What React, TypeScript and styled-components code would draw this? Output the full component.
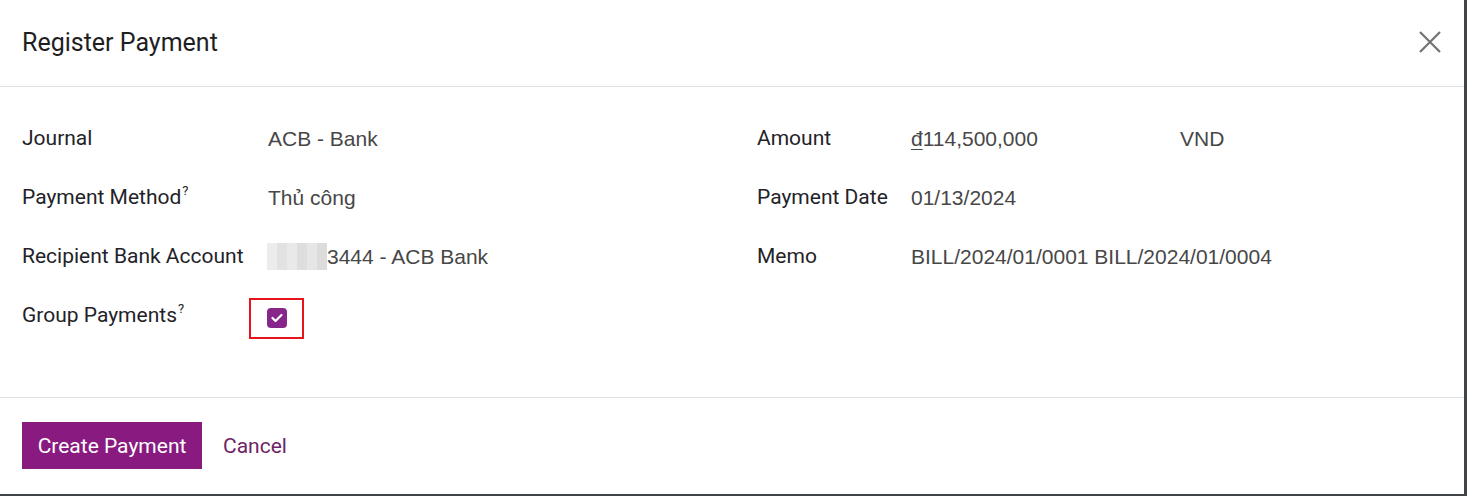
import React from 'react';
import styled, { createGlobalStyle } from 'styled-components';

const GlobalStyle = createGlobalStyle`
  html, body {
    margin: 0;
    padding: 0;
    background: #3f4449;
    font-family: 'Roboto', 'Noto Sans', sans-serif;
  }
  * { box-sizing: border-box; }
`;

const Dialog = styled.div`
  width: 1464px;
  height: 494px;
  background: #fff;
  display: flex;
  flex-direction: column;
`;

const Header = styled.div`
  height: 87px;
  display: flex;
  align-items: center;
  justify-content: space-between;
  padding: 0 22px 2px 22px;
  border-bottom: 1px solid #dee2e6;
`;

const Title = styled.h4`
  margin: 0;
  font-size: 25px;
  font-weight: 400;
  color: #1f1f1f;
`;

const CloseButton = styled.button`
  border: none;
  background: none;
  padding: 0;
  width: 26px;
  height: 26px;
  cursor: pointer;
  display: flex;
  align-items: center;
  justify-content: center;
  margin-right: -1px;
`;

const Body = styled.div`
  flex: 1;
  padding: 22px 22px 0 22px;
  display: grid;
  grid-template-columns: 735px 1fr;
  align-content: start;
`;

const Group = styled.div`
  display: flex;
  flex-direction: column;
`;

const Row = styled.div`
  height: 59px;
  display: flex;
  align-items: center;
`;

const Label = styled.div<{ $width: number }>`
  width: ${(p) => p.$width}px;
  flex-shrink: 0;
  font-size: 21px;
  color: #1f2328;
  margin-top: -2px;

  sup {
    font-size: 13px;
    margin-left: 1px;
    position: relative;
    top: -1px;
  }
`;

const Value = styled.div<{ $width?: number }>`
  font-family: 'Liberation Sans', Arial, sans-serif;
  font-size: 21px;
  color: #474747;
  ${(p) => (p.$width ? `width: ${p.$width}px;` : '')}
  display: flex;
  align-items: center;
`;

const Currency = styled.span`
  text-decoration: underline;
  text-underline-offset: 3px;
  text-decoration-thickness: 1px;
`;

const Blurred = styled.span`
  display: inline-flex;
  width: 60px;
  height: 27px;
  margin-left: -1px;
`;

const BlurCell = styled.span<{ $shade: string }>`
  flex: 1;
  background: ${(p) => p.$shade};
`;

const CheckFrame = styled.div`
  width: 55px;
  height: 41px;
  border: 2px solid #e8141b;
  margin-left: -19px;
  margin-top: 5px;
  display: flex;
  align-items: center;
  justify-content: center;
`;

const CheckBox = styled.span`
  width: 20px;
  height: 20px;
  border-radius: 4px;
  background: #86268a;
  display: flex;
  align-items: center;
  justify-content: center;
`;

const Footer = styled.div`
  border-top: 1px solid #dee2e6;
  height: 97px;
  padding: 24px 22px 0 22px;
  display: flex;
  align-items: flex-start;
  gap: 21px;
`;

const PrimaryButton = styled.button`
  height: 47px;
  width: 180px;
  background: #891a7f;
  color: #fff;
  border: none;
  font-family: 'Roboto', sans-serif;
  font-size: 21px;
  padding: 0;
  cursor: pointer;
`;

const LinkButton = styled.button`
  height: 47px;
  background: none;
  border: none;
  color: #6e2466;
  font-family: 'Roboto', sans-serif;
  font-size: 21px;
  padding: 0;
  cursor: pointer;
`;

const shades = ['#ececec', '#e2e2e2', '#e9e9e9', '#dedede', '#e6e6e6', '#dcdcdc'];

export default function App() {
  return (
    <>
      <GlobalStyle />
      <Dialog>
        <Header>
          <Title>Register Payment</Title>
          <CloseButton aria-label="Close">
            <svg width="24" height="24" viewBox="0 0 24 24">
              <path d="M2 2 L22 22 M22 2 L2 22" stroke="#727272" strokeWidth="2.2" />
            </svg>
          </CloseButton>
        </Header>
        <Body>
          <Group>
            <Row>
              <Label $width={246}>Journal</Label>
              <Value>ACB - Bank</Value>
            </Row>
            <Row>
              <Label $width={246}>
                Payment Method<sup>?</sup>
              </Label>
              <Value>Thủ công</Value>
            </Row>
            <Row>
              <Label $width={246}>Recipient Bank Account</Label>
              <Value>
                <Blurred>
                  {shades.map((s, i) => (
                    <BlurCell key={i} $shade={s} />
                  ))}
                </Blurred>
                3444 - ACB Bank
              </Value>
            </Row>
            <Row>
              <Label $width={246}>
                Group Payments<sup>?</sup>
              </Label>
              <CheckFrame>
                <CheckBox>
                  <svg width="12" height="10" viewBox="0 0 12 10">
                    <path d="M1.5 5 L4.5 8 L10.5 2" stroke="#fff" strokeWidth="2.2" fill="none" strokeLinecap="round" strokeLinejoin="round" />
                  </svg>
                </CheckBox>
              </CheckFrame>
            </Row>
          </Group>
          <Group>
            <Row>
              <Label $width={154}>Amount</Label>
              <Value $width={269}>
                <Currency>đ</Currency>114,500,000
              </Value>
              <Value>VND</Value>
            </Row>
            <Row>
              <Label $width={154}>Payment Date</Label>
              <Value>01/13/2024</Value>
            </Row>
            <Row>
              <Label $width={154}>Memo</Label>
              <Value>BILL/2024/01/0001 BILL/2024/01/0004</Value>
            </Row>
          </Group>
        </Body>
        <Footer>
          <PrimaryButton>Create Payment</PrimaryButton>
          <LinkButton>Cancel</LinkButton>
        </Footer>
      </Dialog>
    </>
  );
}
